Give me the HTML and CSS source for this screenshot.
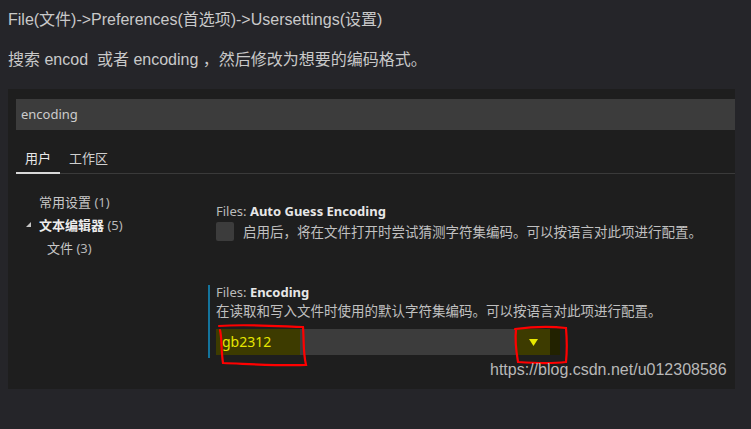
FILE: index.html
```html
<!DOCTYPE html>
<html lang="zh-CN">
<head>
<meta charset="utf-8">
<title>Settings encoding</title>
<link rel="stylesheet" href="styles.css">
</head>
<body>
<div class="intro">
  <p class="line1">File(文件)-&gt;Preferences(首选项)-&gt;Usersettings(设置)</p>
  <p class="line2">搜索 encod &nbsp;或者 encoding ，然后修改为想要的编码格式。</p>
</div>
<div class="panel">
  <div class="search">encoding</div>
  <div class="tabs">
    <div class="tab active">用户</div>
    <div class="tab">工作区</div>
  </div>
  <div class="body">
    <div class="tree">
      <div class="item">常用设置 <span class="count">(1)</span></div>
      <div class="item strong"><span class="twistie"><svg width="5" height="5" viewBox="0 0 5 5"><polygon points="5,0 5,5 0,5" fill="#c5c5c5"/></svg></span>文本编辑器 <span class="count">(5)</span></div>
      <div class="item sub">文件 <span class="count">(3)</span></div>
    </div>
    <div class="settings">
      <div class="setting first">
        <div class="title"><span class="cat">Files: </span><span class="name">Auto Guess Encoding</span></div>
        <div class="check-row">
          <span class="checkbox"></span>
          <span class="desc">启用后，将在文件打开时尝试猜测字符集编码。可以按语言对此项进行配置。</span>
        </div>
      </div>
      <div class="setting focused">
        <div class="title"><span class="cat">Files: </span><span class="name">Encoding</span></div>
        <div class="desc">在读取和写入文件时使用的默认字符集编码。可以按语言对此项进行配置。</div>
        <div class="select">
          <span class="value">gb2312</span>
          <span class="fill"></span>
          <span class="arrow"><svg width="9" height="7" viewBox="0 0 9 7"><polygon points="0,0 9,0 4.5,7" fill="#e8e800"/></svg></span>
          <span class="tail"></span>
        </div>
      </div>
    </div>
  </div>
  <svg class="marks" width="751" height="429" viewBox="0 0 751 429">
    <path d="M219,326 C245,324 275,326 303,327 C304,340 303,352 306,365 C280,366 250,364 223,363 C221,350 222,338 220,330" fill="none" stroke="#ff0000" stroke-width="2.2" stroke-linecap="round"/>
    <path d="M515,329 C530,327 550,326 566,328 C567,340 567,352 566,362 C550,364 532,363 518,362 C516,350 515,338 516,330" fill="none" stroke="#ff0000" stroke-width="2.2" stroke-linecap="round"/>
  </svg>
  <div class="watermark">https://blog.csdn.net/u012308586</div>
</div>
</body>
</html>
```

FILE: styles.css
```css
html, body {
  margin: 0;
  padding: 0;
  background: #252529;
}
body {
  width: 751px;
  height: 429px;
  overflow: hidden;
  position: relative;
  font-family: "Liberation Sans", "Noto Sans CJK SC", sans-serif;
}
.intro {
  padding: 10px 0 0 8px;
  color: #c9c9c9;
  font-size: 16px;
}
.intro p {
  margin: 0;
  line-height: 20px;
  white-space: nowrap;
}
.intro .line2 {
  margin-top: 20px;
}
.panel {
  margin: 19px 0 0 8px;
  width: 719px;
  height: 290px;
  padding: 10px 0 0 8px;
  box-sizing: content-box;
  background: #1e1e1e;
  font-family: "Noto Sans", "Noto Sans CJK SC", sans-serif;
  font-size: 13px;
  color: #cccccc;
}
.search {
  height: 31px;
  line-height: 31px;
  background: #3c3c3c;
  padding-left: 5px;
  color: #cccccc;
}
.tabs {
  display: flex;
  height: 43px;
  border-bottom: 1px solid #3a3a3a;
}
.tab {
  padding: 19px 9px 0;
  line-height: 18px;
  color: #d0d0d0;
  height: 24px;
}
.tab.active {
  border-bottom: 2px solid #d8d8d8;
  height: 23px;
  color: #e8e8e8;
}
.body {
  display: flex;
}
.tree {
  width: 192px;
  padding-top: 16px;
}
.item {
  display: flex;
  align-items: center;
  height: 23px;
  padding-left: 23px;
  color: #c8c8c8;
  white-space: pre;
}
.item .count {
  color: #b8b8b8;
}
.item.strong {
  padding-left: 10px;
  font-weight: bold;
  color: #ececec;
}
.item.strong .count {
  font-weight: normal;
}
.twistie {
  width: 13px;
  display: flex;
  align-items: center;
}
.item.sub {
  padding-left: 31px;
}
.settings {
  flex: 1;
  padding-top: 28px;
}
.setting {
  padding-left: 8px;
}
.title {
  line-height: 18px;
  white-space: pre;
}
.title .cat {
  color: #bbbbbb;
}
.title .name {
  font-weight: bold;
  color: #e7e7e7;
}
.check-row {
  display: flex;
  align-items: center;
  margin-top: 1px;
  height: 21px;
}
.checkbox {
  width: 18px;
  height: 19px;
  background: #3c3c3c;
  border-radius: 2px;
  margin-right: 9px;
}
.desc {
  color: #c0c0c0;
  line-height: 18px;
  font-size: 13.5px;
  white-space: nowrap;
}
.setting.focused {
  margin-top: 43px;
  border-left: 2px solid #14749c;
  padding-left: 6px;
  padding-bottom: 3px;
}
.setting.focused .title {
  line-height: 14px;
}
.setting.focused .desc {
  margin-top: 3px;
}
.select {
  margin-top: 9px;
  width: 344px;
  height: 26px;
  display: flex;
  background: #3c3c3c;
}
.select .value {
  width: 78px;
  padding-left: 6px;
  line-height: 26px;
  background: #3d3b00;
  color: #e6e600;
  font-size: 14px;
}
.select .fill {
  flex: 1;
}
.select .arrow {
  width: 34px;
  background: #3d3b00;
  display: flex;
  align-items: center;
  justify-content: center;
}
.select .tail {
  width: 10px;
  background: #222200;
}
.marks {
  position: absolute;
  left: 0;
  top: 0;
  pointer-events: none;
}
.watermark {
  position: absolute;
  left: 490px;
  top: 360px;
  font-family: "Liberation Sans", sans-serif;
  font-size: 16px;
  line-height: 20px;
  color: #b8b8b8;
}
```
